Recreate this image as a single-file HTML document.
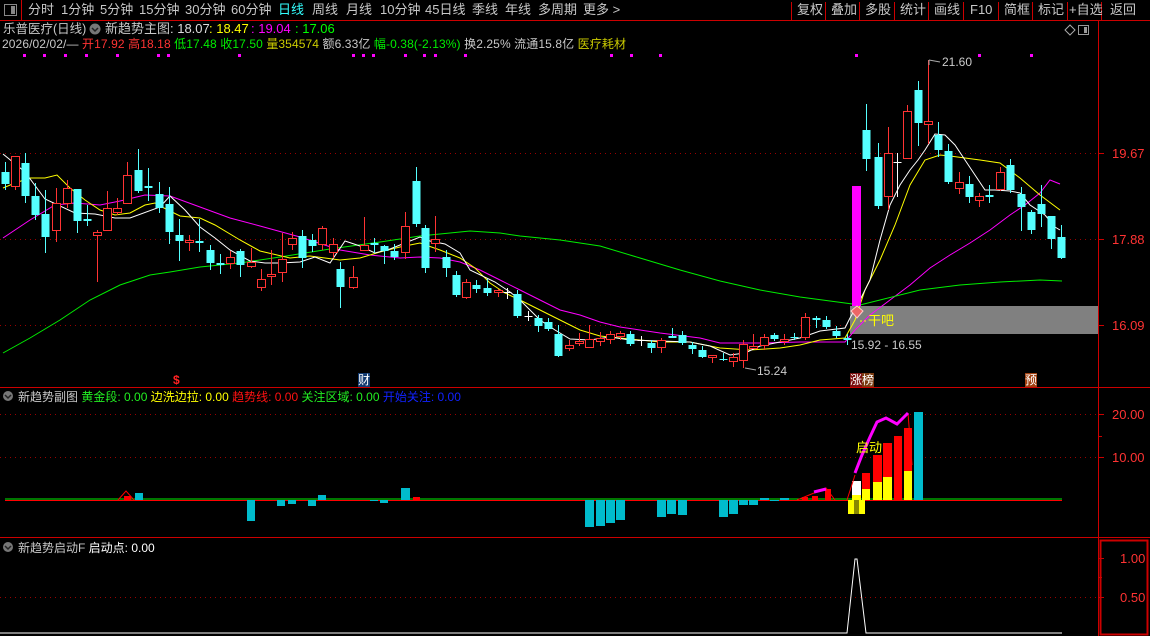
<!DOCTYPE html>
<html><head><meta charset="utf-8">
<style>
*{margin:0;padding:0;box-sizing:border-box}
body{width:1150px;height:636px;background:#000;overflow:hidden;position:relative;font-family:"Liberation Sans","Noto Sans CJK SC",sans-serif;font-size:12px;color:#c8c8c8}
.t{position:absolute;white-space:nowrap;line-height:14px}
.b{position:absolute;top:3px;white-space:nowrap;line-height:14px;font-size:13px}
.r{position:absolute;top:22px;white-space:nowrap;line-height:14px;font-size:13px}
svg{position:absolute;left:0;top:0}
</style></head><body>
<svg id="s" width="1150" height="636" xmlns="http://www.w3.org/2000/svg"></svg>

<div class="b" style="left:28px">分时</div>
<div class="b" style="left:61px">1分钟</div>
<div class="b" style="left:100px">5分钟</div>
<div class="b" style="left:139px">15分钟</div>
<div class="b" style="left:185px">30分钟</div>
<div class="b" style="left:231px">60分钟</div>
<div class="b" style="left:278px;color:#3ff">日线</div>
<div class="b" style="left:312px">周线</div>
<div class="b" style="left:346px">月线</div>
<div class="b" style="left:380px">10分钟</div>
<div class="b" style="left:425px">45日线</div>
<div class="b" style="left:472px">季线</div>
<div class="b" style="left:505px">年线</div>
<div class="b" style="left:538px">多周期</div>
<div class="b" style="left:583px">更多 &gt;</div>
<div class="b" style="left:797px">复权</div>
<div class="b" style="left:831px">叠加</div>
<div class="b" style="left:865px">多股</div>
<div class="b" style="left:900px">统计</div>
<div class="b" style="left:934px">画线</div>
<div class="b" style="left:970px">F10</div>
<div class="b" style="left:1004px">简框</div>
<div class="b" style="left:1038px">标记</div>
<div class="b" style="left:1069px">+自选</div>
<div class="b" style="left:1110px">返回</div>

<div class="r" style="left:3px;font-size:12.5px">乐普医疗(日线)</div>
<div class="r" style="left:105px">新趋势主图</div>
<div class="r" style="left:170px;color:#ddd">: 18.07</div>
<div class="r" style="left:209px;color:#ff0">: 18.47</div>
<div class="r" style="left:251px;color:#f0f">: 19.04</div>
<div class="r" style="left:295px;color:#0f0">: 17.06</div>
<div class="t" style="left:2px;top:37px;font-size:12px;letter-spacing:0.1px">2026/02/02/— <span style="color:#f33">开17.92 高18.18</span> <span style="color:#0e0">低17.48 收17.50</span> <span style="color:#cc0">量354574</span> 额6.33亿 <span style="color:#0e0">幅-0.38(-2.13%)</span> 换2.25% 流通15.8亿 <span style="color:#cc0">医疗耗材</span></div>

<div class="t" style="left:18px;top:390px;font-size:12px">新趋势副图 <span style="color:#2e2">黄金段: 0.00</span> <span style="color:#ff0">边洗边拉: 0.00</span> <span style="color:#f11">趋势线: 0.00</span> <span style="color:#2e2">关注区域: 0.00</span> <span style="color:#12f">开始关注: 0.00</span></div>
<div class="t" style="left:18px;top:541px;font-size:12px">新趋势启动F <span style="color:#fff">启动点: 0.00</span></div>

<div class="t" style="left:1112px;top:147px;font-size:13px;color:#f33">19.67</div>
<div class="t" style="left:1112px;top:233px;font-size:13px;color:#f33">17.88</div>
<div class="t" style="left:1112px;top:319px;font-size:13px;color:#f33">16.09</div>
<div class="t" style="left:1112px;top:408px;font-size:13px;color:#f33">20.00</div>
<div class="t" style="left:1112px;top:451px;font-size:13px;color:#f33">10.00</div>
<div class="t" style="left:1120px;top:552px;font-size:13px;color:#f33">1.00</div>
<div class="t" style="left:1120px;top:591px;font-size:13px;color:#f33">0.50</div>

<div class="t" style="left:942px;top:55px;color:#ccc">21.60</div>
<div class="t" style="left:757px;top:364px;color:#ccc">15.24</div>
<div class="t" style="left:851px;top:338px;color:#ccc">15.92 - 16.55</div>
<div class="t" style="left:868px;top:314px;color:#ff0;font-size:13px">干吧</div>
<div class="t" style="left:856px;top:441px;color:#ff0;font-size:13px">启动</div>
<div class="t" style="left:173px;top:373px;color:#f22;font-weight:bold">$</div>
<div class="t" style="left:358px;top:373px;color:#fff;background:#123a70">财</div>
<div class="t" style="left:850px;top:373px;color:#fff;background:#7a1010">涨</div>
<div class="t" style="left:862px;top:373px;color:#fff;background:#7a3a10">榜</div>
<div class="t" style="left:1025px;top:373px;color:#fff;background:#a04010">预</div>

<script>
var s=document.getElementById('s'),h='';
function L(x1,y1,x2,y2,c,w,d){h+='<line x1="'+x1+'" y1="'+y1+'" x2="'+x2+'" y2="'+y2+'" stroke="'+c+'" stroke-width="'+(w||1)+'"'+(d?' stroke-dasharray="'+d+'"':'')+'/>';}
function R(x,y,w,hh,f,st){h+='<rect x="'+x+'" y="'+y+'" width="'+w+'" height="'+hh+'" fill="'+f+'"'+(st?' stroke="'+st+'"':'')+'/>';}
function P(pts,c,w){h+='<polyline fill="none" stroke="'+c+'" stroke-width="'+(w||1)+'" points="'+pts.map(function(p){return p.join(',')}).join(' ')+'"/>';}
L(0,20.5,1150,20.5,'#c00');L(1098.5,20,1098.5,636,'#c00');L(0,387.5,1150,387.5,'#c00');L(0,537.5,1150,537.5,'#c00');
L(21.5,0,21.5,20,'#c00');
[791,825,859,894,928,963,998,1032,1067,1101].forEach(function(x){L(x+.5,2,x+.5,20,'#c00')});
h+='<rect x="1100.5" y="540.5" width="47" height="94" fill="none" stroke="#c00" stroke-width="2"/>';
R(4.5,4.5,12,11,'none','#888');R(11,6,4,8,'#888');
h+='<circle cx="95" cy="29" r="5.5" fill="#777"/><path d="M92 28l3 3 3-3" stroke="#222" fill="none" stroke-width="1.5"/>';
h+='<circle cx="8" cy="396" r="5" fill="#777"/><path d="M5 395l3 3 3-3" stroke="#222" fill="none" stroke-width="1.5"/>';
h+='<circle cx="8" cy="547" r="5" fill="#777"/><path d="M5 546l3 3 3-3" stroke="#222" fill="none" stroke-width="1.5"/>';
h+='<path d="M1070 25l5 5-5 5-5-5z" fill="none" stroke="#aaa"/>';R(1078.5,25.5,10,9,'none','#999');R(1084,27,3,6,'#999');
[153,239,325].forEach(function(y){L(0,y+.5,1098,y+.5,'#900',1,'1 4');L(1098,y+.5,1104,y+.5,'#c00')});
[414,457].forEach(function(y){L(0,y+.5,1098,y+.5,'#900',1,'1 4');L(1098,y+.5,1104,y+.5,'#c00')});
L(1098,436.5,1102,436.5,'#c00');
L(0,597.5,1098,597.5,'#900',1,'1 4');L(1098,597.5,1104,597.5,'#c00');L(1098,558.5,1104,558.5,'#c00');L(1098,577.5,1102,577.5,'#c00');
[24,44,65,86,117,158,168,239,353,363,373,405,424,435,465,611,631,660,856,979,1031].forEach(function(x){R(x-1,54,3,3,'#f0f')});
R(850,306,248,28,'#808080');
P([[3,238],[30,220],[55,205],[75,203],[100,205],[120,201],[145,195],[170,196],[200,207],[230,218],[260,226],[300,237],[340,250],[370,255],[400,258],[420,257],[440,258],[460,262],[480,270],[500,280],[520,290],[540,300],[560,310],[580,315],[600,322],[620,327],[660,333],[700,338],[720,343],[760,343],[800,342],[845,342],[855,330],[870,315],[890,300],[910,285],[930,268],[950,255],[970,243],[990,230],[1010,215],[1025,205],[1040,193],[1050,180],[1060,184]],'#f0f');
P([[3,353],[30,338],[60,320],[90,300],[120,285],[150,275],[170,272],[200,267],[240,263],[280,257],[330,249],[380,242],[420,236],[450,233],[470,231],[500,233],[520,236],[560,240],[600,246],[640,258],[680,270],[720,281],[760,290],[800,297],[830,301],[860,305],[880,300],[920,290],[960,285],[1000,282],[1040,280],[1062,281]],'#0e0');
P([[3,188],[15,183],[30,178],[45,178],[57,175],[70,188],[85,200],[100,210],[115,215],[130,213],[145,205],[155,203],[160,206],[180,216],[200,218],[215,225],[240,240],[260,251],[290,258],[310,256],[340,260],[360,258],[380,252],[400,247],[420,243],[440,250],[460,258],[475,268],[490,283],[505,293],[520,300],[540,310],[560,320],[580,330],[600,336],[630,339],[660,342],[690,342],[720,348],[750,350],[780,348],[800,345],[820,340],[845,338],[855,320],[865,290],[880,260],[895,225],[910,185],[925,160],[940,155],[950,156],[965,158],[980,160],[1000,163],[1020,178],[1040,195],[1060,210]],'#ff0');
P([[3,154],[25,172],[45,199],[75,213],[95,214],[115,218],[130,218],[160,207],[170,196],[185,210],[200,227],[215,238],[230,250],[250,261],[265,263],[280,263],[300,262],[315,257],[330,263],[345,241],[360,246],[375,253],[390,249],[405,243],[420,237],[430,241],[445,244],[460,253],[470,270],[495,282],[510,292],[520,300],[540,320],[555,330],[570,339],[590,340],[610,337],[630,340],[660,341],[690,342],[710,346],[730,355],[745,353],[760,346],[780,342],[800,338],[820,331],[845,328],[850,318],[860,300],[870,280],[880,240],[890,205],[900,185],[910,170],[918,160],[925,150],[935,134],[945,135],[955,145],[965,160],[975,175],[985,190],[995,190],[1010,191],[1020,193],[1030,205],[1045,215],[1055,227],[1060,230]],'#fff');
var C=[[5,'d',172,184,162,190],[15,'u',156,186,156,190],[25,'d',163,196,153,203],[35,'d',196,215,183,220],[45,'d',214,237,190,253],[56,'u',203,230,188,242],[67,'u',188,203,180,208],[77,'d',189,221,189,233],[87,'d',219,221,205,226],[97,'u',232,235,230,282],[107,'u',208,230,191,230],[117,'u',208,212,198,215],[127,'u',175,203,162,203],[138,'d',170,191,149,193],[148,'d',186,188,168,201],[159,'d',194,208,182,213],[169,'d',204,232,187,244],[179,'d',235,241,219,261],[189,'u',240,242,235,251],[199,'d',241,243,219,252],[210,'d',250,263,245,270],[220,'d',263,265,254,274],[230,'u',257,263,251,269],[240,'d',251,265,249,277],[251,'u',262,266,248,268],[261,'u',279,287,269,291],[271,'u',274,276,250,285],[282,'u',259,272,233,282],[292,'u',238,244,232,250],[302,'d',236,258,230,268],[312,'d',240,246,234,252],[322,'u',228,244,226,250],[333,'u',244,252,238,258],[340,'d',269,287,262,308],[353,'u',277,287,266,289],[364,'u',245,250,217,251],[374,'d',243,245,238,253],[384,'d',246,251,245,264],[394,'d',251,257,244,260],[405,'u',226,252,212,259],[416,'d',181,224,167,227],[425,'d',228,268,225,273],[435,'u',239,243,216,252],[446,'d',257,268,250,277],[456,'d',275,295,271,297],[466,'u',282,297,279,299],[476,'d',285,289,280,293],[487,'d',288,293,279,296],[498,'u',290,292,289,297],[507,'w',292,293,288,299],[517,'d',294,316,290,318],[528,'w',316,317,311,321],[538,'d',318,326,315,332],[548,'d',322,329,318,331],[558,'d',334,356,325,357],[569,'u',345,348,340,351],[579,'u',341,343,333,346],[589,'u',339,347,325,347],[600,'u',338,341,332,346],[610,'u',334,339,331,344],[620,'u',333,336,331,340],[630,'d',334,344,331,346],[641,'w',340,341,336,346],[651,'d',343,348,340,353],[661,'u',340,347,338,353],[672,'d',336,338,328,338],[682,'d',335,343,331,345],[692,'d',345,349,342,354],[702,'d',350,357,346,358],[712,'u',355,357,355,363],[723,'d',359,360,353,361],[733,'u',357,361,353,367],[743,'u',344,360,340,368],[753,'u',346,348,334,348],[764,'u',337,345,334,350],[774,'d',335,339,333,341],[784,'u',339,341,334,345],[794,'d',337,338,333,340],[805,'u',317,337,313,340],[816,'d',318,320,316,328],[826,'d',320,327,316,329],[836,'d',331,336,326,338],[847,'d',338,340,334,345],[866,'d',130,159,104,171],[878,'d',157,206,143,209],[888,'u',153,196,127,210],[897,'w',162,163,153,197],[907,'u',111,158,105,158],[918,'d',90,123,81,146],[928,'u',121,124,60,144],[938,'d',135,150,122,157],[948,'d',151,182,144,184],[959,'u',182,188,172,194],[969,'d',184,197,176,203],[979,'u',196,200,193,207],[989,'d',195,197,185,203],[1000,'u',172,189,167,191],[1010,'d',165,190,159,193],[1021,'d',194,207,187,231],[1031,'d',212,230,210,234],[1041,'d',204,214,185,227],[1051,'d',216,239,216,249],[1061,'d',237,258,225,259]];
C.forEach(function(c){var x=c[0],col=c[1]=='u'?'#f33':c[1]=='w'?'#fff':'#5ff';
 L(x+.5,c[4],x+.5,c[5],col);
 if(c[1]=='u'){h+='<rect x="'+(x-3.5)+'" y="'+(c[2]+.5)+'" width="8" height="'+Math.max(1,c[3]-c[2])+'" fill="#000" stroke="#f33"/>';}
 else R(x-3.5,c[2],8,Math.max(1,c[3]-c[2]),col);
});
R(852,186,9,120,'#f0f');
h+='<path d="M851 311l6-5 6 5-6 7z" fill="#e66" stroke="#fcc"/>';L(860,321,868,321,'#ff0',1,'2 2');
L(929,60,929,65,'#aaa');L(929,60,940,62,'#aaa');L(745,368,756,370,'#aaa');
L(5,499,1062,499,'#0e0');L(5,500.5,1062,500.5,'#f00');
[[135,493,8,7],[247,500,8,21],[277,500,8,6],[288,500,8,4],[308,500,8,6],[318,495,8,5],[370,500,8,1],[380,500,8,3],[401,488,9,12],[585,500,9,27],[596,500,9,26],[606,500,9,23],[616,500,9,20],[657,500,9,17],[667,500,9,14],[678,500,9,15],[719,500,9,17],[729,500,9,14],[739,500,9,5],[749,500,9,5],[760,498,9,2],[770,500,9,1],[780,498,9,2],[914,412,9,88]].forEach(function(b){R(b[0],b[1],b[2],b[3],'#0bc')});
R(124,496,7,4,'#f00');P([[118,500],[126,491],[134,500]],'#f00');R(413,497,7,3,'#f00');
R(802,497,6,3,'#f00');R(812,496,6,4,'#f00');R(825,489,6,11,'#f00');P([[797,500],[814,493],[826,488],[835,500]],'#f00');P([[814,492],[826,489]],'#f0f',3);
R(852,481,9,14,'#fff');R(852,495,9,5,'#ff0');R(848,500,17,14,'#ff0');R(854,500,5,14,'#880');
R(862,473,8,17,'#f00');R(862,489,8,11,'#ff0');R(873,455,9,28,'#f00');R(873,482,9,18,'#ff0');R(883,443,9,34,'#f00');R(883,477,9,23,'#ff0');R(894,436,8,64,'#f00');R(904,428,8,43,'#f00');R(904,471,8,29,'#ff0');
P([[847,500],[855,475]],'#f00');P([[908,413],[912,465]],'#f00');
P([[855,473],[862,455],[870,437],[877,422],[886,418],[897,424],[908,413]],'#f0f',3);
P([[0,633],[847,633],[855,559],[857,559],[866,633],[1062,633]],'#fff');
s.innerHTML=h;
</script>
</body></html>
